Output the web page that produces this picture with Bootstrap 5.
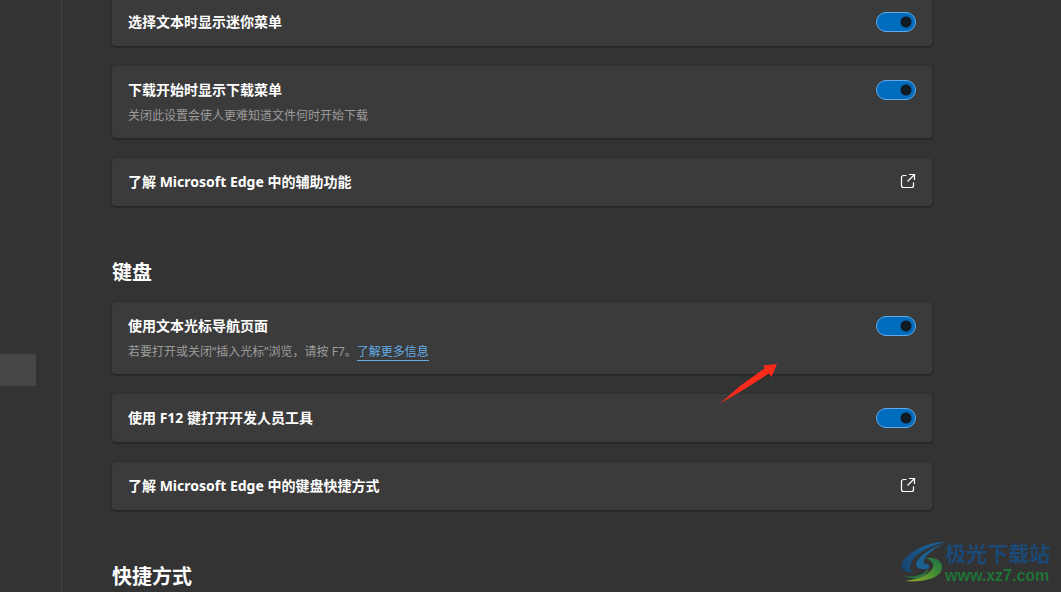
<!DOCTYPE html>
<html lang="zh-CN" data-bs-theme="dark">
<head>
<meta charset="utf-8">
<meta name="viewport" content="width=device-width, initial-scale=1">
<title>辅助功能</title>
<link href="https://cdn.jsdelivr.net/npm/bootstrap@5.3.0/dist/css/bootstrap.min.css" rel="stylesheet">
<style>
body { background: #333; color: #fff; font-family: "Noto Sans", "Noto Sans CJK SC", sans-serif; font-size: 14px; line-height: 20px; }
.side { width: 62px; border-right: 1px solid #444; padding-top: 354px; }
.side-item { width: 36px; height: 32px; background: #474747; border-radius: 0 2px 2px 0; }
.panel { padding-right: 16px; margin-left: 50px; }
.settings { max-width: 820px; }
.setting { background: #3b3b3b; border-radius: 4px; padding: 14px 16px; box-shadow: 0 1px 3px rgba(0,0,0,.4); color: #fff; }
.setting.cut { padding-top: 12px; border-radius: 0 0 4px 4px; }
.setting.tall { padding-bottom: 12px; }
.setting-title { font-weight: 700; }
.setting-note { font-size: 12px; color: #9c9c9c; margin: 6px 0 0; }
.setting-note a { color: #63ace5; text-decoration: none; border-bottom: 1px solid #63ace5; }
.stack { gap: 20px; }
.group-title { font-size: 20px; line-height: 30px; font-weight: 700; margin: 52px 0 14px; }
.toggle.form-check-input { width: 40px; height: 20px; margin: 0; border: 1px solid #62a8ea; border-radius: 10px;
  background: radial-gradient(circle at 29px 9px, #111a22 5px, #006cbe 6px) #006cbe; }
.open-icon { width: 16px; height: 16px; margin-top: 1px; }
.pointer { right: 155px; top: 62px; width: 57px; height: 40px; }
.site-mark { right: 11px; bottom: 5px; line-height: 22px; }
.mark-name { font-size: 21px; font-weight: 700; color: #1b4a78; margin-bottom: 1px; }
.mark-url { font-family: "Liberation Sans", sans-serif; font-size: 16px; font-weight: 700; color: #1f7536; }
</style>
</head>
<body>
<div class="d-flex min-vh-100">
  <nav class="side flex-shrink-0" aria-label="设置"><div class="side-item"></div></nav>
  <main class="panel flex-grow-1">
    <div class="settings">
      <section class="stack d-flex flex-column">
        <div class="setting cut d-flex justify-content-between">
          <label class="setting-title" for="mini">选择文本时显示迷你菜单</label>
          <input class="toggle form-check-input flex-shrink-0" type="checkbox" role="switch" id="mini" checked>
        </div>
        <div class="setting tall d-flex justify-content-between">
          <div>
            <label class="setting-title d-block" for="download">下载开始时显示下载菜单</label>
            <p class="setting-note">关闭此设置会使人更难知道文件何时开始下载</p>
          </div>
          <input class="toggle form-check-input flex-shrink-0" type="checkbox" role="switch" id="download" checked>
        </div>
        <a class="setting d-flex justify-content-between text-decoration-none" href="#">
          <span class="setting-title">了解 Microsoft Edge 中的辅助功能</span>
          <svg class="open-icon flex-shrink-0" viewBox="0 0 16 16" fill="none" stroke="#fff" stroke-width="1.2" aria-hidden="true"><path d="M6.5 2.5H3.5a2 2 0 0 0-2 2v8a2 2 0 0 0 2 2h8a2 2 0 0 0 2-2V9.5M9 1.5h5.5V7M14.5 1.5L7.5 8.5"/></svg>
        </a>
      </section>
      <h2 class="group-title">键盘</h2>
      <section class="stack d-flex flex-column">
        <div class="setting tall position-relative d-flex justify-content-between">
          <div>
            <label class="setting-title d-block" for="caret">使用文本光标导航页面</label>
            <p class="setting-note">若要打开或关闭“插入光标”浏览，请按 F7。<a href="#">了解更多信息</a></p>
          </div>
          <input class="toggle form-check-input flex-shrink-0" type="checkbox" role="switch" id="caret" checked>
          <svg class="pointer position-absolute z-1 pe-none" viewBox="0 0 57 40" aria-hidden="true"><path fill="#fb2b1c" d="M0 39.500L20 22L45 4L43 1.500L57 0L51.500 13L49 9.500L24 25.500Z"/></svg>
        </div>
        <div class="setting d-flex justify-content-between">
          <label class="setting-title" for="devtools">使用 F12 键打开开发人员工具</label>
          <input class="toggle form-check-input flex-shrink-0" type="checkbox" role="switch" id="devtools" checked>
        </div>
        <a class="setting d-flex justify-content-between text-decoration-none" href="#">
          <span class="setting-title">了解 Microsoft Edge 中的键盘快捷方式</span>
          <svg class="open-icon flex-shrink-0" viewBox="0 0 16 16" fill="none" stroke="#fff" stroke-width="1.2" aria-hidden="true"><path d="M6.5 2.5H3.5a2 2 0 0 0-2 2v8a2 2 0 0 0 2 2h8a2 2 0 0 0 2-2V9.5M9 1.5h5.5V7M14.5 1.5L7.5 8.5"/></svg>
        </a>
      </section>
      <h2 class="group-title mb-0">快捷方式</h2>
    </div>
  </main>
</div>
<div class="site-mark position-fixed d-flex align-items-start pe-none">
  <svg width="44" height="42" viewBox="0 0 44 42" aria-hidden="true">
    <defs>
      <linearGradient id="blue" x1="0" y1="1" x2="1" y2="0"><stop offset="0" stop-color="#17426b"/><stop offset="1" stop-color="#1d649c"/></linearGradient>
      <linearGradient id="green" x1="0" y1="1" x2="1" y2="0"><stop offset="0" stop-color="#96a52c"/><stop offset=".5" stop-color="#4c922f"/><stop offset="1" stop-color="#1b6e4c"/></linearGradient>
    </defs>
    <path fill="url(#blue)" d="M44 0C28 0 8 8 1 21C-1 28 5 31 13 30C9 29 8 25 10 21C14 12 28 4 44 0Z"/>
    <path fill="#1c5f91" d="M44 1C32 5 20 12 16 19C13 25 18 28 26 27C29 26 29 23 26 22C23 22 22 21 23 18C26 12 34 6 44 1Z"/>
    <path fill="url(#green)" d="M25 16C35 15 42 19 41 26C40 35 25 41 4 39C18 37 30 32 32 25C33 21 30 18 25 16Z"/>
    <path fill="#277b43" d="M3 34C14 36 23 33 28 26C26 35 15 39 3 34Z"/>
  </svg>
  <div><div class="mark-name">极光下载站</div><div class="mark-url">www.xz7.com</div></div>
</div>
<script src="https://cdn.jsdelivr.net/npm/bootstrap@5.3.0/dist/js/bootstrap.bundle.min.js"></script>
</body>
</html>
